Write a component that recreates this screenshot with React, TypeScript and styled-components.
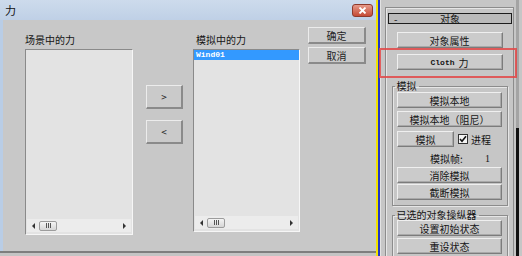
import { FC, ReactNode } from "react";
import styled, { createGlobalStyle } from "styled-components";

const GlobalStyle = createGlobalStyle`
	html, body {
		margin:0;
		padding:0;
		background:#c6c6c6;
		overflow:hidden;
	}
	#root {
		width:522px;
		height:256px;
	}
`;

const Screen = styled.div`
	position:relative;
	display:flex;
	width:522px;
	height:256px;
	overflow:hidden;
	font-family:"Noto Sans CJK SC", sans-serif;
	font-size:10px;
	color:#141414;
`;

/* ---------- dialog ---------- */

const Dialog = styled.div`
	display:flex;
	flex-direction:column;
	width:376px;
	flex-shrink:0;
	background:#c4c4c4;
`;

const TitleBar = styled.div`
	height:20px;
	display:flex;
	align-items:center;
	justify-content:space-between;
	padding:0 3px 0 5px;
	background:linear-gradient(#cddbec, #bfd0e6);
	font-size:11px;
	color:#111;
`;

const CloseButton = styled.div`
	width:19px;
	height:11px;
	border:1px solid #8e3a2c;
	border-radius:3px;
	background:linear-gradient(#e69a8a, #c54a35);
	display:flex;
	align-items:center;
	justify-content:center;
`;

const Body = styled.div`
	height:231px;
	display:flex;
	align-items:flex-start;
	padding-left:22px;
	border-left:3px solid #b9cde6;
	background:#c8c8c8;
	box-sizing:border-box;
`;

const BottomEdge = styled.div`
	height:2px;
	background:#7e7e7e;
`;

const ListColumn = styled.div<{ $gap: number }>`
	display:flex;
	flex-direction:column;
	padding-top:14px;
	margin-left:${p => p.$gap}px;
`;

const ListLabel = styled.div<{ $indent?: number }>`
	height:12px;
	line-height:12px;
	margin-bottom:3px;
	padding-left:${p => p.$indent || 0}px;
`;

const ListBox = styled.div<{ $w: number; $h: number }>`
	width:${p => p.$w}px;
	height:${p => p.$h}px;
	box-sizing:border-box;
	border-top:1px solid #8a8a8a;
	border-left:1px solid #8a8a8a;
	border-right:1px solid #f6f6f6;
	border-bottom:1px solid #f6f6f6;
	background:#e3e3e3;
	display:flex;
	flex-direction:column;
	justify-content:space-between;
`;

const ListItem = styled.div<{ $selected?: boolean }>`
	height:10px;
	line-height:10px;
	padding-left:2px;
	font-family:"Liberation Mono", monospace;
	font-size:8px;
	font-weight:bold;
	background:${p => p.$selected ? "#3399ff" : "transparent"};
	color:${p => p.$selected ? "#fff" : "#111"};
`;

const HScroll = styled.div`
	height:13px;
	margin:0 1px 2px 1px;
	background:#ececec;
	display:flex;
	align-items:center;
	padding:0 5px;
	gap:4px;
`;

const Arrow = styled.div<{ $dir: "left" | "right" }>`
	width:0;
	height:0;
	border-top:3px solid transparent;
	border-bottom:3px solid transparent;
	${p => p.$dir === "left" ? "border-right:3px solid #333;" : "border-left:3px solid #333; margin-left:auto;"}
`;

const Thumb = styled.div`
	width:18px;
	height:10px;
	box-sizing:border-box;
	border:1px solid #9c9c9c;
	border-radius:2px;
	background:linear-gradient(#f4f4f4, #d6d6d6);
	display:flex;
	align-items:center;
	justify-content:center;
	gap:1px;

	span {
		width:1px;
		height:5px;
		background:#555;
	}
`;

const ArrowColumn = styled.div`
	display:flex;
	flex-direction:column;
	gap:11px;
	margin-left:13px;
	padding-top:65px;
`;

const ActionColumn = styled.div`
	display:flex;
	flex-direction:column;
	gap:3px;
	margin-left:8px;
	padding-top:7px;
`;

const DlgButton = styled.div<{ $w: number; $h: number }>`
	width:${p => p.$w}px;
	height:${p => p.$h}px;
	box-sizing:border-box;
	display:flex;
	align-items:center;
	justify-content:center;
	background:#cacaca;
	border-top:1px solid #ececec;
	border-left:1px solid #ececec;
	border-right:2px solid #8a8a8a;
	border-bottom:2px solid #8a8a8a;
	font-size:10px;
	color:#222;
`;

/* ---------- command panel ---------- */

const Stripe = styled.div`
	width:4px;
	flex-shrink:0;
	background:linear-gradient(to right, #f2e400 50%, #2436c4 50%);
`;

const Panel = styled.div`
	flex:1;
	display:flex;
	background:#c6c6c6;
`;

const PanelContent = styled.div`
	flex:1;
	padding:7px 2px 0 4px;
	border-left:1px solid #e2e2e2;
`;

const ScrollTrack = styled.div`
	width:3px;
	background:#111;
	margin-right:3px;
	display:flex;
	flex-direction:column;

	&::before {
		content:"";
		height:128px;
		background:#a4a4a4;
	}
`;

const Rollout = styled.div`
	height:260px;
	box-sizing:border-box;
	border:1px solid #8c8c8c;
	box-shadow:inset 1px 1px 0 #e6e6e6;
	display:flex;
	flex-direction:column;
	align-items:center;
	padding-top:5px;
`;

const RolloutHeader = styled.div`
	align-self:stretch;
	margin:0 1px 0 2px;
	height:11px;
	box-sizing:border-box;
	border:1px solid #1c1c1c;
	background:#bababa;
	display:flex;
	align-items:center;
	position:relative;
	justify-content:center;
	line-height:10px;

	b {
		position:absolute;
		left:5px;
		font-weight:normal;
	}
`;

const CmdButton = styled.div<{ $w?: number; $top?: number }>`
	width:${p => p.$w || 106}px;
	height:16px;
	margin-top:${p => p.$top || 0}px;
	box-sizing:border-box;
	display:flex;
	align-items:center;
	justify-content:center;
	background:#cbcbcb;
	border-top:1px solid #efefef;
	border-left:1px solid #efefef;
	border-right:1px solid #7c7c7c;
	border-bottom:1px solid #7c7c7c;
	box-shadow:inset -1px -1px 0 #a9a9a9;
	font-size:10px;
	color:#141414;
	flex-shrink:0;
`;

const Mono = styled.span`
	font-family:"Liberation Mono", monospace;
	font-size:8px;
	font-weight:bold;
	margin-right:4px;
`;

const Group = styled.fieldset<{ $top: number; $bottom: number; $inner: number }>`
	width:116px;
	box-sizing:border-box;
	margin:${p => p.$top}px 0 0 0;
	padding:${p => p.$inner}px 0 ${p => p.$bottom}px 0;
	border:1px solid #8c8c8c;
	box-shadow:inset 1px 1px 0 #e6e6e6, 1px 1px 0 #e6e6e6;
	display:flex;
	flex-direction:column;
	align-items:center;
	min-inline-size:0;

	legend {
		height:10px;
		line-height:10px;
		padding:0 2px;
		margin-left:2px;
		font-size:10px;
	}
`;

const Row = styled.div<{ $top: number }>`
	width:105px;
	display:flex;
	align-items:center;
	margin-top:${p => p.$top}px;
	height:16px;
	flex-shrink:0;
`;

const Check = styled.div`
	width:10px;
	height:10px;
	box-sizing:border-box;
	margin:0 3px 0 4px;
	border:1px solid #333;
	background:#f4f4f4;
	display:flex;
	align-items:center;
	justify-content:center;
`;

const FrameRow = styled.div`
	width:105px;
	height:12px;
	line-height:12px;
	margin-top:6px;
	display:flex;
	flex-shrink:0;

	span:first-child {
		margin-left:33px;
	}
	span:last-child {
		margin-left:auto;
		margin-right:12px;
		font-family:"Liberation Serif", serif;
	}
`;

const Highlight = styled.div`
	position:absolute;
	left:379px;
	top:48px;
	width:138px;
	height:30px;
	box-sizing:border-box;
	border:2px solid rgba(226, 70, 70, 0.85);
	pointer-events:none;
`;

const ScrollBar:FC = () => (
	<HScroll>
		<Arrow $dir="left" />
		<Thumb><span /><span /><span /></Thumb>
		<Arrow $dir="right" />
	</HScroll>
);

const ForceList:FC<{
	label:string;
	width:number;
	height:number;
	gap:number;
	indent?:number;
	children?:ReactNode;
}> = (props) => (
	<ListColumn $gap={ props.gap }>
		<ListLabel $indent={ props.indent }>{ props.label }</ListLabel>
		<ListBox $w={ props.width } $h={ props.height }>
			<div>{ props.children }</div>
			<ScrollBar />
		</ListBox>
	</ListColumn>
);

export default function App() {
	return (
		<>
			<GlobalStyle />
			<Screen>
				<Dialog>
					<TitleBar>
						<span>力</span>
						<CloseButton>
							<svg width="9" height="7" viewBox="0 0 9 7">
								<path d="M1.5 0.5 L7.5 6.5 M7.5 0.5 L1.5 6.5" stroke="#fff" strokeWidth="1.8" />
							</svg>
						</CloseButton>
					</TitleBar>
					<Body>
						<ForceList label="场景中的力" width={108} height={186} gap={0} />
						<ArrowColumn>
							<DlgButton $w={37} $h={24}>&gt;</DlgButton>
							<DlgButton $w={37} $h={24}>&lt;</DlgButton>
						</ArrowColumn>
						<ForceList label="模拟中的力" width={107} height={183} gap={10} indent={3}>
							<ListItem $selected>Wind01</ListItem>
						</ForceList>
						<ActionColumn>
							<DlgButton $w={58} $h={17}>确定</DlgButton>
							<DlgButton $w={58} $h={17}>取消</DlgButton>
						</ActionColumn>
					</Body>
					<BottomEdge />
				</Dialog>

				<Stripe />

				<Panel>
					<PanelContent>
						<Rollout>
							<RolloutHeader><b>-</b>对象</RolloutHeader>
							<CmdButton $top={8}>对象属性</CmdButton>
							<CmdButton $top={6}><Mono>Cloth</Mono>力</CmdButton>

							<Group $top={11} $bottom={5} $inner={1}>
								<legend>模拟</legend>
								<CmdButton $w={105}>模拟本地</CmdButton>
								<CmdButton $w={105} $top={3}>模拟本地（阻尼）</CmdButton>
								<Row $top={4}>
									<CmdButton $w={57}>模拟</CmdButton>
									<Check>
										<svg width="8" height="8" viewBox="0 0 8 8">
											<path d="M1 4 L3 6.2 L7 1.2" stroke="#111" strokeWidth="1.6" fill="none" />
										</svg>
									</Check>
									<span>进程</span>
								</Row>
								<FrameRow>
									<span>模拟帧:</span>
									<span>1</span>
								</FrameRow>
								<CmdButton $w={105} $top={2}>消除模拟</CmdButton>
								<CmdButton $w={105} $top={1}>截断模拟</CmdButton>
							</Group>

							<Group $top={4} $bottom={4} $inner={0}>
								<legend>已选的对象操纵器</legend>
								<CmdButton $w={105}>设置初始状态</CmdButton>
								<CmdButton $w={105} $top={2}>重设状态</CmdButton>
							</Group>
						</Rollout>
					</PanelContent>
					<ScrollTrack />
				</Panel>

				<Highlight />
			</Screen>
		</>
	);
}
